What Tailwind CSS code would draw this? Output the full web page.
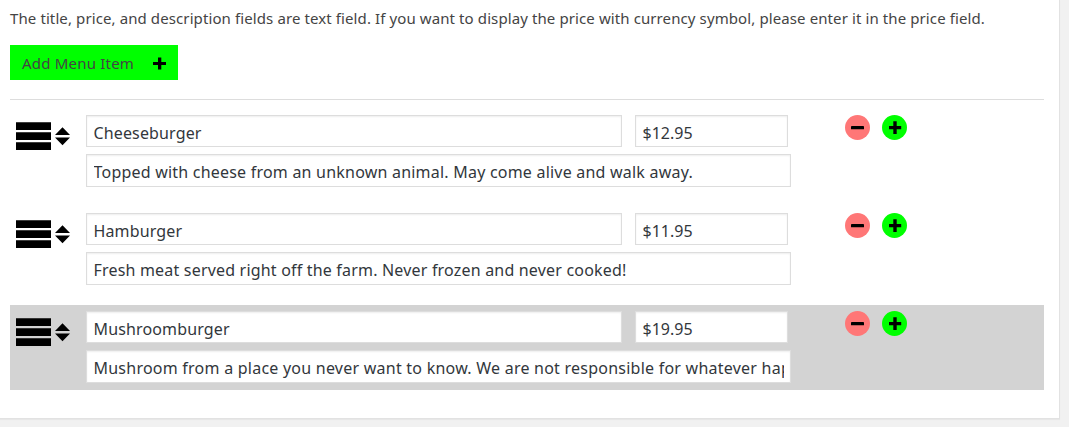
<!DOCTYPE html>
<html lang="en">
<head>
<meta charset="utf-8">
<title>Menu Items</title>
<script src="https://cdn.jsdelivr.net/npm/@tailwindcss/browser@4"></script>
</head>
<body class="h-[427px] overflow-hidden bg-[#f1f1f1] font-['Noto_Sans','Open_Sans',sans-serif] text-[#444]">
<svg class="hidden">
  <symbol id="grip" viewBox="0 0 54 28"><path d="M0 .3h35V8H0zM0 10.300h35V18H0zM0 20.300h35V28H0zM46.500 5.300l7.500 7.700H39zM39 15.500h15l-7.500 7.700z"/></symbol>
  <symbol id="minus" viewBox="0 0 25 25"><circle cx="12.500" cy="12.500" r="12.500" fill="#ff7777"/><rect x="6" y="11" width="13" height="3.300" rx=".4"/></symbol>
  <symbol id="plus" viewBox="0 0 25 25"><circle cx="12.500" cy="12.500" r="12.500" fill="#0f0"/><path d="M11.300 6.300h3.400v4.700h4.500v3.200h-4.500v4.700h-3.400v-4.700H7V11h4.300z"/></symbol>
</svg>
<main class="h-[419px] w-[1060px] border-r border-b border-[#e2e2e2] bg-white pl-[10px] pr-[15px] pt-[7px] shadow-[0_1px_1px_rgba(0,0,0,0.04)]">
  <p class="h-[38px] whitespace-nowrap text-[15px] leading-[23px] tracking-[0.103px]"><span>The title, price, and description fields are text field. If you want to display the price with currency symbol, please enter it in the price field.</span></p>
  <button class="flex h-[35px] w-[168px] items-center justify-between bg-[#0f0] pl-3 pr-[12px] text-[15px] tracking-[0.2px]"><span class="pt-[2px]">Add Menu Item</span>
    <svg class="mt-[2px] size-[13px]" viewBox="0 0 13 13"><path d="M5 .5h3.300V5H13v3H8.300v4.500H5V8H0V5h5z"/></svg></button>
  <hr class="mt-[19px] border-[#ddd]">
  <section class="mt-[9px] flex flex-col gap-[13px] text-base tracking-[0.14px] text-[#32373c]">
    <div class="flex h-[85px] pl-[6px] pt-[6px]">
      <svg class="mt-[7px] h-[28px] w-[54px] shrink-0"><use href="#grip"/></svg>
      <div class="ml-4 flex w-[705px] shrink-0 flex-col gap-[7px]">
        <div class="flex gap-[13px]">
          <div class="h-8 w-[536px] overflow-hidden whitespace-nowrap border border-[#ddd] bg-white px-[6.500px] leading-[34px] shadow-[inset_0_1px_2px_rgba(0,0,0,0.07)]"><span>Cheeseburger</span></div>
          <div class="h-8 w-[153px] border border-[#ddd] bg-white px-[6.500px] leading-[34px] tracking-normal shadow-[inset_0_1px_2px_rgba(0,0,0,0.07)]"><span>$12.95</span></div>
        </div>
        <div class="h-[33px] border border-[#ddd] bg-white px-[6.500px] leading-[34px] tracking-[0.215px] shadow-[inset_0_1px_2px_rgba(0,0,0,0.07)]"><div class="h-[31px] overflow-hidden whitespace-nowrap"><span>Topped with cheese from an unknown animal. May come alive and walk away.</span></div></div>
      </div>
      <div class="ml-[54px] flex gap-3"><svg class="size-[25px]"><use href="#minus"/></svg><svg class="size-[25px]"><use href="#plus"/></svg></div>
    </div>
    <div class="flex h-[85px] pl-[6px] pt-[6px]">
      <svg class="mt-[7px] h-[28px] w-[54px] shrink-0"><use href="#grip"/></svg>
      <div class="ml-4 flex w-[705px] shrink-0 flex-col gap-[7px]">
        <div class="flex gap-[13px]">
          <div class="h-8 w-[536px] overflow-hidden whitespace-nowrap border border-[#ddd] bg-white px-[6.500px] leading-[34px] shadow-[inset_0_1px_2px_rgba(0,0,0,0.07)]"><span>Hamburger</span></div>
          <div class="h-8 w-[153px] border border-[#ddd] bg-white px-[6.500px] leading-[34px] tracking-normal shadow-[inset_0_1px_2px_rgba(0,0,0,0.07)]"><span>$11.95</span></div>
        </div>
        <div class="h-[33px] border border-[#ddd] bg-white px-[6.500px] leading-[34px] tracking-[0.19px] shadow-[inset_0_1px_2px_rgba(0,0,0,0.07)]"><div class="h-[31px] overflow-hidden whitespace-nowrap"><span>Fresh meat served right off the farm. Never frozen and never cooked!</span></div></div>
      </div>
      <div class="ml-[54px] flex gap-3"><svg class="size-[25px]"><use href="#minus"/></svg><svg class="size-[25px]"><use href="#plus"/></svg></div>
    </div>
    <div class="flex h-[85px] bg-[#d3d3d3] pl-[6px] pt-[6px]">
      <svg class="mt-[7px] h-[28px] w-[54px] shrink-0"><use href="#grip"/></svg>
      <div class="ml-4 flex w-[705px] shrink-0 flex-col gap-[7px]">
        <div class="flex gap-[13px]">
          <div class="h-8 w-[536px] overflow-hidden whitespace-nowrap border border-[#ddd] bg-white px-[6.500px] leading-[34px] shadow-[inset_0_1px_2px_rgba(0,0,0,0.07)]"><span>Mushroomburger</span></div>
          <div class="h-8 w-[153px] border border-[#ddd] bg-white px-[6.500px] leading-[34px] tracking-normal shadow-[inset_0_1px_2px_rgba(0,0,0,0.07)]"><span>$19.95</span></div>
        </div>
        <div class="h-[33px] border border-[#ddd] bg-white px-[6.500px] leading-[34px] tracking-[0.237px] shadow-[inset_0_1px_2px_rgba(0,0,0,0.07)]"><div class="h-[31px] overflow-hidden whitespace-nowrap"><span>Mushroom from a place you never want to know. We are not responsible for whatever happens.</span></div></div>
      </div>
      <div class="ml-[54px] flex gap-3"><svg class="size-[25px]"><use href="#minus"/></svg><svg class="size-[25px]"><use href="#plus"/></svg></div>
    </div>
  </section>
</main>
</body>
</html>
